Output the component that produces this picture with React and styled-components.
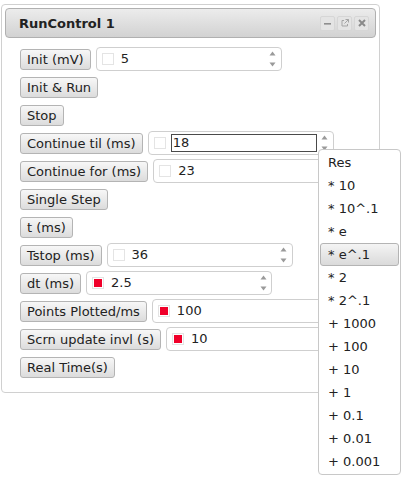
import React from 'react';
import styled, { createGlobalStyle } from 'styled-components';

const GlobalStyle = createGlobalStyle`
  body {
    margin: 0;
    background: #fff;
    font-family: "DejaVu Sans", Verdana, sans-serif;
  }
`;

const Page = styled.div`
  position: relative;
  width: 404px;
  height: 483px;
  padding: 4px 0 0 1px;
  box-sizing: border-box;
  overflow: hidden;
`;

const Dialog = styled.div`
  width: 379px;
  height: 389px;
  box-sizing: border-box;
  border: 1px solid #d0d0d0;
  border-radius: 4px;
  padding: 3px;
  background: #fff;
`;

const TitleBar = styled.div`
  display: flex;
  align-items: center;
  height: 30px;
  box-sizing: border-box;
  border: 1px solid #b0b0b0;
  border-radius: 4px;
  padding: 0 6px 0 13px;
  background: linear-gradient(#ececec, #d2d2d2);
`;

const Title = styled.span`
  font-size: 13px;
  font-weight: bold;
  color: #222;
`;

const TitleIcons = styled.div`
  display: flex;
  gap: 2px;
  margin-left: auto;
`;

const TitleIcon = styled.span`
  display: flex;
  align-items: center;
  justify-content: center;
  width: 13px;
  height: 13px;
  border-radius: 2px;
  background: #e4e4e4;
  border: 1px solid #d6d6d6;
`;

const Content = styled.div`
  display: flex;
  flex-direction: column;
  padding: 7px 0 0 15px;
`;

const Row = styled.div`
  display: flex;
  align-items: center;
  gap: 5px;
  height: 28px;
`;

const Button = styled.button`
  height: 21px;
  padding: 0 6px;
  border: 1px solid #b4b4b4;
  border-radius: 3px;
  background: linear-gradient(#f7f7f7, #dcdcdc);
  font-family: "DejaVu Sans", Verdana, sans-serif;
  font-size: 13px;
  color: #222;
  white-space: nowrap;
  cursor: pointer;
`;

const Spinner = styled.div`
  display: flex;
  align-items: center;
  flex: none;
  width: 186px;
  height: 24px;
  box-sizing: border-box;
  border: 1px solid #cfcfcf;
  border-radius: 4px;
  padding-left: 5px;
  background: #fff;
`;

const Swatch = styled.span`
  flex: none;
  width: 12px;
  height: 12px;
  box-sizing: border-box;
  border: 1px solid #e4e4e4;
  padding: 1px;
  &::after {
    content: '';
    display: block;
    width: 100%;
    height: 100%;
    background: ${p => (p.$red ? '#f0002a' : 'transparent')};
  }
`;

const Value = styled.span`
  flex: 1;
  height: 18px;
  line-height: 16px;
  box-sizing: border-box;
  margin-left: ${p => (p.$focused ? '5px' : '6px')};
  padding-left: ${p => (p.$focused ? '1px' : '0')};
  border: 1px solid ${p => (p.$focused ? '#4a4a4a' : 'transparent')};
  font-size: 13px;
  color: #222;
`;

const Arrows = styled.div`
  display: flex;
  flex-direction: column;
  justify-content: space-between;
  align-items: center;
  width: 14px;
  height: 20px;
  margin: 0 1px 0 1px;
  padding: 2px 0;
  box-sizing: border-box;
`;

const Menu = styled.div`
  position: absolute;
  left: 318px;
  top: 149px;
  width: 83px;
  box-sizing: border-box;
  border: 1px solid #c8c8c8;
  border-radius: 4px;
  padding: 1px;
  background: #fff;
`;

const MenuItem = styled.div`
  height: 23px;
  line-height: 21px;
  box-sizing: border-box;
  padding-left: 7px;
  border: 1px solid ${p => (p.$active ? '#b4b4b4' : 'transparent')};
  border-radius: 3px;
  background: ${p => (p.$active ? 'linear-gradient(#f4f4f4, #dadada)' : 'transparent')};
  font-size: 13px;
  color: #222;
  white-space: nowrap;
`;

function SpinArrows() {
  return (
    <Arrows>
      <svg width="7" height="5" viewBox="0 0 7 5">
        <path d="M3.5 0.5 L6.5 4.5 L0.5 4.5 Z" fill="#9a9a9a" />
      </svg>
      <svg width="7" height="5" viewBox="0 0 7 5">
        <path d="M0.5 0.5 L6.5 0.5 L3.5 4.5 Z" fill="#9a9a9a" />
      </svg>
    </Arrows>
  );
}

function SpinBox({ value, red, focused }) {
  return (
    <Spinner>
      <Swatch $red={red} />
      <Value $focused={focused}>{value}</Value>
      <SpinArrows />
    </Spinner>
  );
}

const rows = [
  { label: 'Init (mV)', value: '5' },
  { label: 'Init & Run' },
  { label: 'Stop' },
  { label: 'Continue til (ms)', value: '18', focused: true },
  { label: 'Continue for (ms)', value: '23' },
  { label: 'Single Step' },
  { label: 't (ms)' },
  { label: 'Tstop (ms)', value: '36' },
  { label: 'dt (ms)', value: '2.5', red: true },
  { label: 'Points Plotted/ms', value: '100', red: true },
  { label: 'Scrn update invl (s)', value: '10', red: true },
  { label: 'Real Time(s)' },
];

const menuItems = [
  'Res', '* 10', '* 10^.1', '* e', '* e^.1', '* 2', '* 2^.1',
  '+ 1000', '+ 100', '+ 10', '+ 1', '+ 0.1', '+ 0.01', '+ 0.001',
];

export default function App() {
  return (
    <>
      <GlobalStyle />
      <Page>
        <Dialog>
          <TitleBar>
            <Title>RunControl 1</Title>
            <TitleIcons>
              <TitleIcon>
                <svg width="7" height="7" viewBox="0 0 7 7">
                  <rect x="0" y="3" width="7" height="1.6" fill="#8e8e8e" />
                </svg>
              </TitleIcon>
              <TitleIcon>
                <svg width="8" height="8" viewBox="0 0 8 8">
                  <path d="M3 1.5 H1 V7 H6.5 V5" fill="none" stroke="#a5a5a5" strokeWidth="1" />
                  <path d="M4.5 0.5 H7.5 V3.5 M7.5 0.5 L3.5 4.5" fill="none" stroke="#a5a5a5" strokeWidth="1" />
                </svg>
              </TitleIcon>
              <TitleIcon>
                <svg width="8" height="8" viewBox="0 0 8 8">
                  <path d="M1 1 L7 7 M7 1 L1 7" stroke="#8a8a8a" strokeWidth="2" />
                </svg>
              </TitleIcon>
            </TitleIcons>
          </TitleBar>
          <Content>
            {rows.map(r => (
              <Row key={r.label}>
                <Button>{r.label}</Button>
                {r.value !== undefined && (
                  <SpinBox value={r.value} red={r.red} focused={r.focused} />
                )}
              </Row>
            ))}
          </Content>
        </Dialog>
        <Menu>
          {menuItems.map(item => (
            <MenuItem key={item} $active={item === '* e^.1'}>{item}</MenuItem>
          ))}
        </Menu>
      </Page>
    </>
  );
}
